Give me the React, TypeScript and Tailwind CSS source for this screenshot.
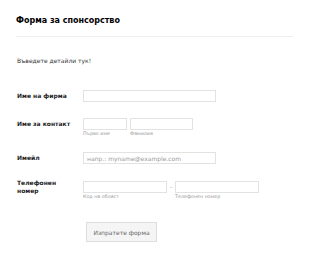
export default function App() {
  const font = { fontFamily: '"DejaVu Sans", Verdana, sans-serif' };
  return (
    <div className="w-[310px] h-[255px] bg-white px-[16px] text-[#222]" style={font}>
      <div className="pt-[16px] pb-[10px] border-b border-[#eeeeee] mr-[1px]">
        <h1 className="text-[8px] leading-[10px] font-bold text-black">Форма за спонсорство</h1>
      </div>

      <p className="mt-[20px] pl-[1px] text-[6px] leading-[8px] text-[#333]">Въведете детайли тук!</p>

      {/* Company */}
      <div className="mt-[25px] flex">
        <label className="w-[67px] pl-[1px] text-[6px] leading-[12px] font-bold">Име на фирма</label>
        <div className="w-[133px] h-[12px] border border-[#e2e2e2] bg-white" />
      </div>

      {/* Contact */}
      <div className="mt-[16px] flex">
        <label className="w-[67px] pl-[1px] text-[6px] leading-[12px] font-bold">Име за контакт</label>
        <div className="flex gap-[3px]">
          <div className="flex flex-col">
            <div className="w-[44px] h-[12px] border border-[#e2e2e2]" />
            <span className="mt-[1px] text-[4.8px] leading-[6px] text-[#999]">Първо име</span>
          </div>
          <div className="flex flex-col">
            <div className="w-[63px] h-[12px] border border-[#e2e2e2]" />
            <span className="mt-[1px] text-[4.8px] leading-[6px] text-[#999]">Фамилия</span>
          </div>
        </div>
      </div>

      {/* Email */}
      <div className="mt-[15px] flex">
        <label className="w-[67px] pl-[1px] text-[6px] leading-[12px] font-bold">Имейл</label>
        <div className="w-[133px] h-[12px] border border-[#e2e2e2] flex items-center pl-[3px] text-[6px] text-[#999]">
          напр.: myname@example.com
        </div>
      </div>

      {/* Phone */}
      <div className="mt-[15px] flex">
        <label className="w-[67px] pl-[1px] text-[6px] leading-[8px] font-bold">
          Телефонен
          <br />
          номер
        </label>
        <div className="mt-[2px] flex">
          <div className="flex flex-col">
            <div className="w-[84px] h-[12px] border border-[#e2e2e2]" />
            <span className="mt-[1px] text-[4.8px] leading-[6px] text-[#999]">Код на област</span>
          </div>
          <span className="w-[8px] text-center text-[6px] leading-[12px] text-[#999]">-</span>
          <div className="flex flex-col">
            <div className="w-[84px] h-[12px] border border-[#e2e2e2]" />
            <span className="mt-[1px] text-[4.8px] leading-[6px] text-[#999]">Телефонен номер</span>
          </div>
        </div>
      </div>

      <button
        type="button"
        className="mt-[22px] ml-[70px] w-[71px] h-[20px] border border-[#dddddd] bg-[#f5f5f5] text-[6px] text-[#666]"
      >
        Изпратете форма
      </button>
    </div>
  );
}
